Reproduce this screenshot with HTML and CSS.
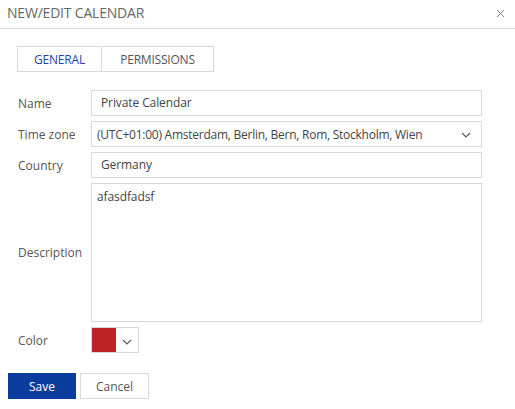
FILE: index.html
```html
<!DOCTYPE html>
<html>
<head>
<meta charset="utf-8">
<link rel="stylesheet" href="styles.css">
</head>
<body>
<div class="dialog">
  <div class="header">
    <span class="title">NEW/EDIT CALENDAR</span>
    <svg class="close" width="9" height="9" viewBox="0 0 9 9"><path d="M1 1 L8 8 M8 1 L1 8" stroke="#8a8a8a" stroke-width="1" fill="none"/></svg>
  </div>
  <div class="body">
    <div class="tabs">
      <div class="tab active">GENERAL</div>
      <div class="tab">PERMISSIONS</div>
    </div>
    <div class="form">
      <label class="lbl">Name</label>
      <div class="field input">Private Calendar</div>
      <label class="lbl">Time zone</label>
      <div class="field select"><span>(UTC+01:00) Amsterdam, Berlin, Bern, Rom, Stockholm, Wien</span>
        <svg width="10" height="6" viewBox="0 0 10 6"><path d="M1 1 L5 5 L9 1" stroke="#555" stroke-width="1.1" fill="none"/></svg>
      </div>
      <label class="lbl">Country</label>
      <div class="field input">Germany</div>
      <label class="lbl">Description</label>
      <div class="field textarea">afasdfadsf</div>
      <label class="lbl">Color</label>
      <div class="colorpick">
        <div class="swatch"></div>
        <div class="cdrop"><svg width="10" height="6" viewBox="0 0 10 6"><path d="M1 1 L5 5 L9 1" stroke="#555" stroke-width="1.1" fill="none"/></svg></div>
      </div>
    </div>
  </div>
  <div class="actions">
    <button class="btn primary">Save</button>
    <button class="btn">Cancel</button>
  </div>
</div>
</body>
</html>
```
FILE: styles.css
```css
html, body {
  margin: 0;
  padding: 0;
  background: #fff;
}
body {
  font-family: "Open Sans", "Noto Sans", sans-serif;
  font-size: 12px;
  color: #444;
}
.dialog {
  width: 515px;
}
.header {
  display: flex;
  align-items: center;
  justify-content: space-between;
  padding: 0 10px 0 7px;
  box-sizing: border-box;
  height: 29px;
  border-bottom: 1px solid #dcdcdc;
}
.title {
  font-size: 14px;
  color: #666;
  letter-spacing: -0.2px;
  margin-top: -3px;
}
.close {
  margin-top: -2px;
}
.body {
  padding: 17px 0 0 17px;
}
.tabs {
  display: flex;
  width: 197px;
  height: 26px;
  border: 1px solid #d9d9d9;
  box-sizing: border-box;
}
.tab {
  display: flex;
  align-items: center;
  justify-content: center;
  color: #555;
  font-size: 12px;
  letter-spacing: -0.2px;
}
.tab.active {
  width: 83px;
  color: #1d46a8;
  border-right: 1px solid #d9d9d9;
}
.tab:last-child {
  flex: 1;
}
.form {
  margin-top: 18px;
  display: grid;
  grid-template-columns: 74px 391px;
  row-gap: 5px;
  align-items: center;
}
.lbl {
  padding-left: 1px;
  color: #555;
}
.field {
  border: 1px solid #d9d9d9;
  box-sizing: border-box;
  color: #444;
  letter-spacing: -0.1px;
}
.input {
  height: 26px;
  line-height: 24px;
  padding-left: 9px;
}
.select {
  height: 26px;
  display: flex;
  align-items: center;
  justify-content: space-between;
  padding: 0 10px 0 5px;
  letter-spacing: -0.25px;
}
.select svg {
  margin-top: 2px;
}
.textarea {
  height: 139px;
  padding: 4px 5px;
  line-height: 18px;
  align-self: start;
}
.colorpick {
  display: flex;
  width: 48px;
  height: 26px;
  border: 1px solid #d9d9d9;
  box-sizing: border-box;
}
.swatch {
  width: 24px;
  background: #bc2326;
}
.cdrop {
  flex: 1;
  display: flex;
  align-items: center;
  justify-content: center;
  padding-top: 3px;
}
.actions {
  display: flex;
  gap: 4px;
  padding: 20px 0 0 8px;
}
.btn {
  height: 26px;
  width: 69px;
  font-family: inherit;
  font-size: 12px;
  border: 1px solid #d9d9d9;
  background: #fff;
  color: #555;
  padding: 0;
}
.btn.primary {
  width: 68px;
  background: #0b3d9e;
  border-color: #0b3d9e;
  color: #fff;
}
```
